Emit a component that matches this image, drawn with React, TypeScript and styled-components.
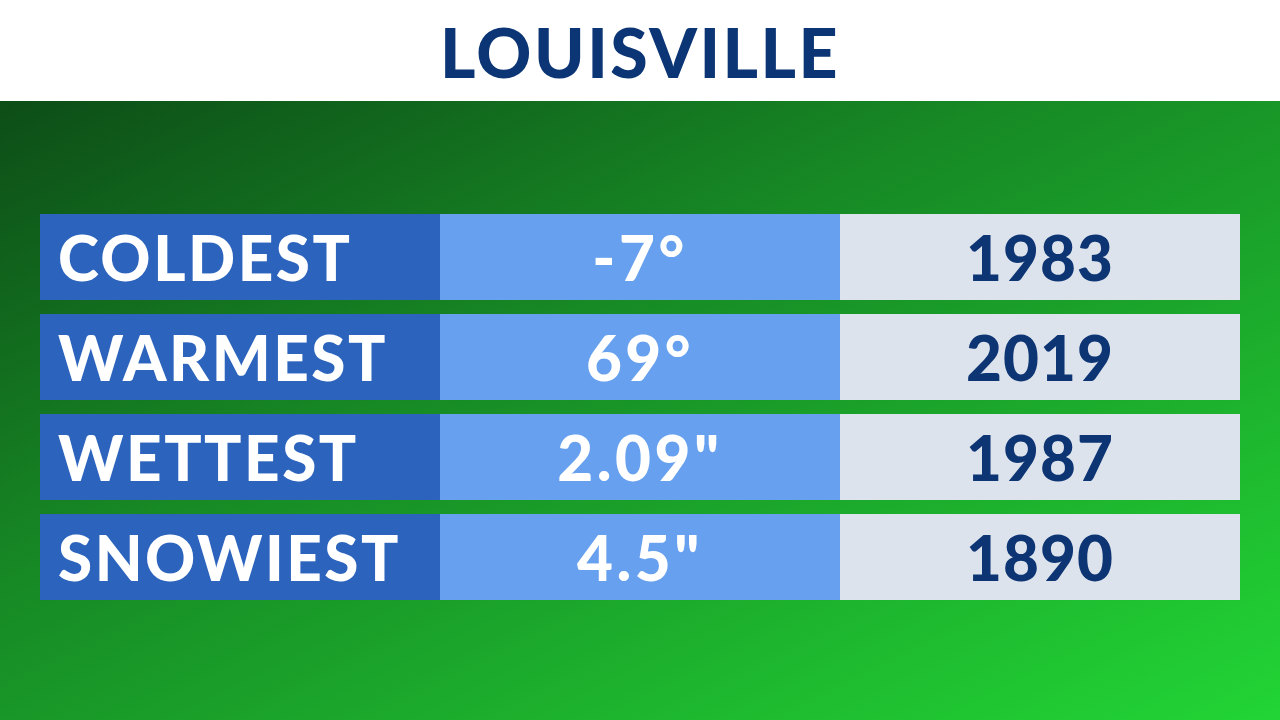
import * as React from "react";
import styled, { createGlobalStyle } from "styled-components";

const GlobalStyle = createGlobalStyle`
  html, body {
    margin: 0;
    padding: 0;
  }
  body {
    font-family: Lato, "Open Sans", sans-serif;
  }
`;

const Screen = styled.div`
  width: 1280px;
  height: 720px;
  display: flex;
  flex-direction: column;
  overflow: hidden;
`;

const Header = styled.header`
  height: 101px;
  flex: 0 0 101px;
  background: #ffffff;
  display: flex;
  align-items: center;
  justify-content: center;
`;

const Title = styled.h1`
  margin: 0;
  padding-top: 3px;
  font-family: Lato, sans-serif;
  font-weight: 900;
  font-size: 68px;
  line-height: 1;
  letter-spacing: 2.5px;
  color: #0b3574;
`;

const Board = styled.main`
  flex: 1 1 auto;
  background: linear-gradient(to bottom right, #0d4d17 0%, #178a25 40%, #22d535 100%);
  padding: 113px 40px 0;
  display: flex;
  flex-direction: column;
  gap: 14px;
`;

const Row = styled.div`
  display: grid;
  grid-template-columns: 400px 400px 400px;
  height: 86px;
`;

type Tone = "label" | "value" | "year";

const Cell = styled.div<{ $tone: Tone }>`
  display: flex;
  align-items: center;
  justify-content: ${(p) => (p.$tone === "label" ? "flex-start" : "center")};
  padding-left: ${(p) => (p.$tone === "label" ? "18px" : "0")};
  background: ${(p) =>
    p.$tone === "label" ? "#2b63bd" : p.$tone === "value" ? "#66a0ee" : "#dde3ec"};
  color: ${(p) => (p.$tone === "year" ? "#0d3473" : "#ffffff")};
  font-family: Lato, sans-serif;
  font-weight: 900;
  font-size: 62px;
  letter-spacing: ${(p) => (p.$tone === "year" ? "1px" : p.$tone === "value" ? "3.5px" : "2.5px")};
  line-height: 1;
`;

const records = [
  { label: "COLDEST", value: "-7°", year: "1983" },
  { label: "WARMEST", value: "69°", year: "2019" },
  { label: "WETTEST", value: '2.09"', year: "1987" },
  { label: "SNOWIEST", value: '4.5"', year: "1890" },
];

export default function App() {
  return (
    <Screen>
      <GlobalStyle />
      <Header>
        <Title>LOUISVILLE</Title>
      </Header>
      <Board>
        {records.map((r) => (
          <Row key={r.label}>
            <Cell $tone="label">{r.label}</Cell>
            <Cell $tone="value">{r.value}</Cell>
            <Cell $tone="year">{r.year}</Cell>
          </Row>
        ))}
      </Board>
    </Screen>
  );
}
